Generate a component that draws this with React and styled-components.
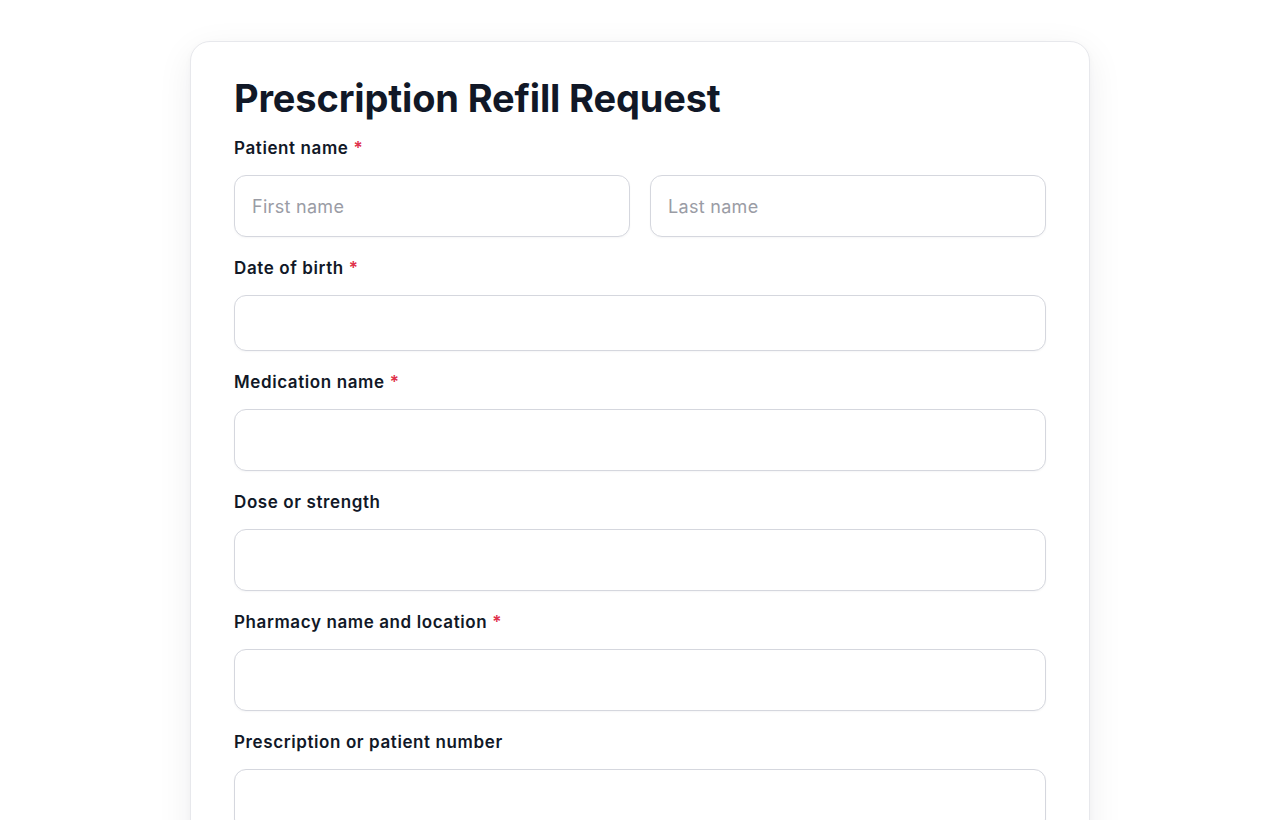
import React from "react";
import styled, { createGlobalStyle } from "styled-components";

const Global = createGlobalStyle`
  * { box-sizing: border-box; }
  html, body { margin: 0; padding: 0; background: #ffffff; }
  body { font-family: Inter, "Noto Sans", "Liberation Sans", sans-serif; color: #111827; }
`;

const Page = styled.div`
  display: flex;
  justify-content: center;
  padding-top: 41px;
`;

const Card = styled.form`
  width: 900px;
  background: #fff;
  border: 1px solid #e7e8ec;
  border-radius: 20px;
  box-shadow: 0 10px 36px rgba(17, 24, 39, 0.07), 0 2px 6px rgba(17, 24, 39, 0.03);
  padding: 33px 43px 40px;
  display: flex;
  flex-direction: column;
  gap: 19px;
`;

const Title = styled.h1`
  margin: 0 0 -4px;
  font-size: 38px;
  line-height: 46px;
  font-weight: 700;
  letter-spacing: -0.15px;
  color: #111827;
`;

const Field = styled.div`
  display: flex;
  flex-direction: column;
  gap: 15px;
`;

const Label = styled.label`
  font-size: 17px;
  line-height: 24px;
  font-weight: 600;
  letter-spacing: 0.6px;
  color: #111827;
`;

const Req = styled.span`
  color: #e0314b;
  margin-left: 5px;
`;

const Row = styled.div`
  display: grid;
  grid-template-columns: 1fr 1fr;
  gap: 20px;
`;

const Input = styled.input`
  width: 100%;
  height: ${(p) => p.$h || 62}px;
  border: 1px solid #d5d7de;
  border-radius: 12px;
  background: #fff;
  padding: 0 17px;
  font-family: inherit;
  font-size: 18px;
  letter-spacing: 0.3px;
  color: #111827;
  box-shadow: 0 1px 2px rgba(17, 24, 39, 0.04);
  outline: none;
  &::placeholder { color: #9a9ca5; }
`;

function F({ label, required, children }) {
  return (
    <Field>
      <Label>
        {label}
        {required && <Req>*</Req>}
      </Label>
      {children}
    </Field>
  );
}

export default function App() {
  return (
    <>
      <Global />
      <Page>
        <Card onSubmit={(e) => e.preventDefault()}>
          <Title>Prescription Refill Request</Title>
          <F label="Patient name" required>
            <Row>
              <Input placeholder="First name" />
              <Input placeholder="Last name" />
            </Row>
          </F>
          <F label="Date of birth" required>
            <Input $h={56} />
          </F>
          <F label="Medication name" required>
            <Input />
          </F>
          <F label="Dose or strength">
            <Input />
          </F>
          <F label="Pharmacy name and location" required>
            <Input />
          </F>
          <F label="Prescription or patient number">
            <Input />
          </F>
        </Card>
      </Page>
    </>
  );
}
